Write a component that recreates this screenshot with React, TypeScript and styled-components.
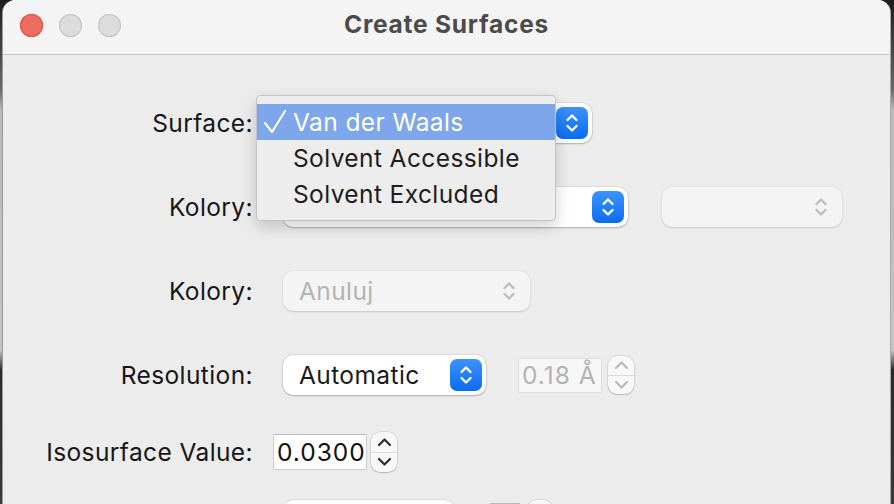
import React from "react";
import styled, {createGlobalStyle, css} from "styled-components";

const GlobalStyle = createGlobalStyle`
  html, body {
    margin: 0;
    padding: 0;
    width: 894px;
    height: 504px;
    overflow: hidden;
  }
  body {
    font-family: Inter, "Liberation Sans", Arial, sans-serif;
    -webkit-font-smoothing: antialiased;
  }
`;

const Desktop = styled.div`
  width: 894px;
  height: 504px;
  overflow: hidden;
  display: flex;
  background:
    linear-gradient(180deg, #1c1c1c 0px, #6a6a6a 90px, #b9b9b9 110px, #c4c4c4 350px, #2a2a2a 370px, #3a3a3a 504px);
`;

const Window = styled.div`
  margin-left: 3px;
  width: 887px;
  height: 560px;
  background: #ececec;
  border-radius: 13px 13px 0 0;
  border-right: 1px solid #a9a9a9;
  box-shadow: -1px 0 0 #9a9a9a;
  display: flex;
  flex-direction: column;
  overflow: hidden;
`;

const TitleBar = styled.div`
  height: 54px;
  flex-shrink: 0;
  background: #f4f4f4;
  border-bottom: 1px solid #c8c8c8;
  display: flex;
  align-items: center;
  position: relative;
  padding-left: 17px;
  gap: 16px;
`;

const Light = styled.span<{color: string; ring: string}>`
  width: 23px;
  height: 23px;
  border-radius: 50%;
  background: ${p => p.color};
  box-shadow: inset 0 0 0 1px ${p => p.ring};
  margin-top: -4px;
`;

const Title = styled.div`
  position: absolute;
  left: 0;
  right: 0;
  top: 9px;
  text-align: center;
  font-weight: 700;
  font-size: 24.5px;
  color: #4b4b4b;
  letter-spacing: 0.75px;
`;

const Content = styled.div`
  flex: 1;
  position: relative;
  padding-top: 26px;
  display: flex;
  flex-direction: column;
`;

const Row = styled.div<{h: number}>`
  height: ${p => p.h}px;
  display: flex;
  align-items: center;
  flex-shrink: 0;
`;

const Label = styled.div`
  width: 250px;
  text-align: right;
  font-size: 24.5px;
  color: #161616;
  letter-spacing: 0.4px;
`;

const Controls = styled.div<{offset: number; gap?: number}>`
  margin-left: ${p => p.offset}px;
  display: flex;
  align-items: center;
  gap: ${p => p.gap ?? 0}px;
`;

const Popup = styled.div<{w: number; disabled?: boolean}>`
  width: ${p => p.w}px;
  height: 40px;
  box-sizing: border-box;
  border-radius: 10px;
  display: flex;
  align-items: center;
  padding: 0 4px 0 16px;
  font-size: 24.5px;
  letter-spacing: 0.4px;
  ${p => p.disabled ? css`
    background: #f4f4f4;
    color: #b3b3b3;
    box-shadow: 0 0 0 0.5px rgba(0,0,0,0.06), 0 1px 2px rgba(0,0,0,0.12);
    padding-right: 14px;
  ` : css`
    background: #ffffff;
    color: #1a1a1a;
    box-shadow: 0 0 0 0.5px rgba(0,0,0,0.12), 0 1px 2px rgba(0,0,0,0.22);
  `}
`;

const PopupText = styled.span`
  flex: 1;
`;

const BlueStep = styled.div`
  width: 32px;
  height: 32px;
  border-radius: 7px;
  background: linear-gradient(180deg, #3d93ff 0%, #0b6cf3 100%);
  display: flex;
  align-items: center;
  justify-content: center;
`;

const TextField = styled.div<{w: number; h: number; disabled?: boolean}>`
  width: ${p => p.w}px;
  height: ${p => p.h}px;
  box-sizing: border-box;
  display: flex;
  align-items: center;
  padding-left: 3px;
  font-size: 24.5px;
  letter-spacing: 1px;
  ${p => p.disabled ? css`
    background: #f6f6f6;
    border: 1px solid #dedede;
    color: #b3b3b3;
  ` : css`
    background: #ffffff;
    border: 1px solid #cfcfcf;
    border-top-color: #b9b9b9;
    color: #111111;
  `}
`;

const Stepper = styled.div<{h: number}>`
  width: 26px;
  height: ${p => p.h}px;
  box-sizing: border-box;
  border-radius: 9px;
  background: #f8f8f8;
  box-shadow: 0 0 0 0.5px rgba(0,0,0,0.14), 0 1px 1.5px rgba(0,0,0,0.16);
  display: flex;
  flex-direction: column;
`;

const StepHalf = styled.div<{top?: boolean}>`
  flex: 1;
  display: flex;
  align-items: center;
  justify-content: center;
  ${p => p.top && css`border-bottom: 1px solid #dadada;`}
`;

const Menu = styled.div`
  position: absolute;
  left: 253px;
  top: 40px;
  width: 300px;
  box-sizing: border-box;
  padding: 8px 0 8px;
  background: rgba(236, 236, 236, 0.97);
  border: 1px solid #c4c4c4;
  border-radius: 4px;
  box-shadow: 0 6px 16px rgba(0,0,0,0.18);
  z-index: 2;
`;

const MenuItem = styled.div<{active?: boolean}>`
  height: 36px;
  display: flex;
  align-items: center;
  font-size: 24.5px;
  letter-spacing: 0.4px;
  color: ${p => p.active ? "#ffffff" : "#1d1d1d"};
  background: ${p => p.active ? "#7ea6ea" : "transparent"};
`;

const CheckSlot = styled.span`
  width: 36px;
  height: 36px;
  display: flex;
  align-items: center;
  padding-left: 6px;
  box-sizing: border-box;
`;

function CheckMark() {
    return (
        <svg width="24" height="26" viewBox="0 0 24 26" fill="none">
            <path d="M2 14 L9 23 L22 2" stroke="#ffffff" strokeWidth="2.1" strokeLinecap="round" strokeLinejoin="round"/>
        </svg>
    );
}

function Chevrons({color, size = 1, stroke = 2.3}: {color: string; size?: number; stroke?: number}) {
    return (
        <svg width={14 * size} height={24 * size} viewBox="0 0 14 24" fill="none">
            <path d="M2.5 9 L7 4.5 L11.5 9" stroke={color} strokeWidth={stroke} strokeLinecap="round" strokeLinejoin="round"/>
            <path d="M2.5 15 L7 19.5 L11.5 15" stroke={color} strokeWidth={stroke} strokeLinecap="round" strokeLinejoin="round"/>
        </svg>
    );
}

function Chevron({up, color}: {up?: boolean; color: string}) {
    return (
        <svg width="15" height="10" viewBox="0 0 15 10" fill="none">
            <path d={up ? "M2 8 L7.5 2.5 L13 8" : "M2 2 L7.5 7.5 L13 2"} stroke={color} strokeWidth="2.2" strokeLinecap="round" strokeLinejoin="round"/>
        </svg>
    );
}

function SmallStepper({h, disabled}: {h: number; disabled?: boolean}) {
    const color = disabled ? "#b9b9b9" : "#2b2b2b";
    return (
        <Stepper h={h}>
            <StepHalf top><Chevron up color={color}/></StepHalf>
            <StepHalf><Chevron color={color}/></StepHalf>
        </Stepper>
    );
}

export default function App() {
    return (
        <Desktop>
            <GlobalStyle/>
            <Window>
                <TitleBar>
                    <Light color="#ee6b5f" ring="#d8564b"/>
                    <Light color="#dcdcdc" ring="#c4c4c4"/>
                    <Light color="#dcdcdc" ring="#c4c4c4"/>
                    <Title>Create Surfaces</Title>
                </TitleBar>
                <Content>
                    <Row h={84}>
                        <Label>Surface:</Label>
                        <Controls offset={30}>
                            {/* the open menu covers this popup's title */}
                            <Popup w={309}>
                                <PopupText/>
                                <BlueStep><Chevrons color="#ffffff"/></BlueStep>
                            </Popup>
                        </Controls>
                    </Row>
                    <Row h={84}>
                        <Label>Kolory:</Label>
                        <Controls offset={30} gap={34}>
                            <Popup w={345}>
                                <PopupText/>
                                <BlueStep><Chevrons color="#ffffff"/></BlueStep>
                            </Popup>
                            <Popup w={180} disabled>
                                <PopupText/>
                                <Chevrons color="#bdbdbd"/>
                            </Popup>
                        </Controls>
                    </Row>
                    <Row h={84}>
                        <Label>Kolory:</Label>
                        <Controls offset={30}>
                            <Popup w={247} disabled>
                                <PopupText>Anuluj</PopupText>
                                <Chevrons color="#bdbdbd"/>
                            </Popup>
                        </Controls>
                    </Row>
                    <Row h={84}>
                        <Label>Resolution:</Label>
                        <Controls offset={30}>
                            <Popup w={203}>
                                <PopupText>Automatic</PopupText>
                                <BlueStep><Chevrons color="#ffffff"/></BlueStep>
                            </Popup>
                            <Controls offset={32} gap={6}>
                                <TextField w={84} h={35} disabled>0.18 Å</TextField>
                                <SmallStepper h={38} disabled/>
                            </Controls>
                        </Controls>
                    </Row>
                    <Row h={70}>
                        <Label>Isosurface Value:</Label>
                        <Controls offset={20} gap={4}>
                            <TextField w={94} h={36}>0.0300</TextField>
                            <SmallStepper h={40}/>
                        </Controls>
                    </Row>
                    <Row h={66}>
                        <Label/>
                        <Controls offset={30}>
                            <Popup w={172}>
                                <PopupText/>
                            </Popup>
                            <Controls offset={35} gap={7}>
                                <TextField w={30} h={35}/>
                                <SmallStepper h={40}/>
                            </Controls>
                        </Controls>
                    </Row>
                    <Menu>
                        <MenuItem active><CheckSlot><CheckMark/></CheckSlot>Van der Waals</MenuItem>
                        <MenuItem><CheckSlot/>Solvent Accessible</MenuItem>
                        <MenuItem><CheckSlot/>Solvent Excluded</MenuItem>
                    </Menu>
                </Content>
            </Window>
        </Desktop>
    );
}
